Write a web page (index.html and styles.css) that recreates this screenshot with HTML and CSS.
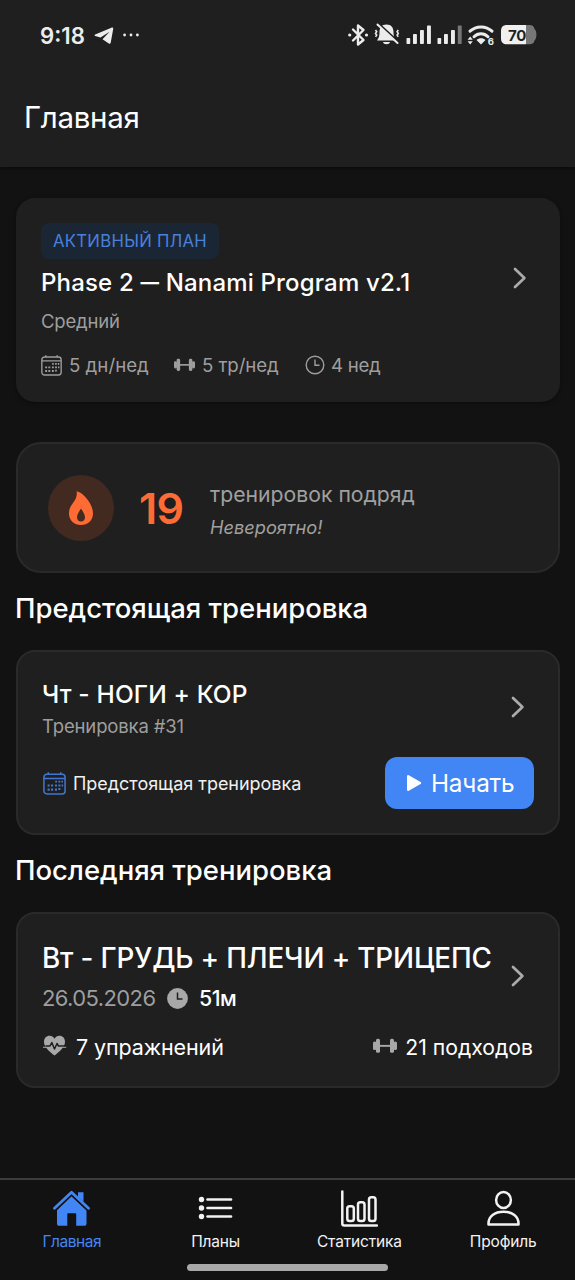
FILE: index.html
```html
<!DOCTYPE html>
<html lang="ru">
<head>
<meta charset="utf-8">
<title>Главная</title>
<link rel="stylesheet" href="styles.css">
</head>
<body>
<svg class="defs" width="0" height="0" aria-hidden="true">
  <symbol id="calendar" viewBox="0 0 20 20">
    <g fill="none" stroke="currentColor" stroke-width="1.300"><rect x=".8" y="1.900" width="18.400" height="17.200" rx="2.600"/><path d="M.8 5.600h18.400M4.600.2v2M15.400.2v2"/></g>
    <path fill="currentColor" d="M10.600 7.600h1.600v1.600h-1.600zM13.400 7.600H15v1.600h-1.600zM16 7.600h1.400v1.600H16zM4 10.900h1.800v1.800H4zM7 10.900h1.800v1.800H7zM10.400 10.900H12.200v1.800h-1.800zM13.400 10.900H15.200v1.800h-1.800zM16.200 10.900h1.300v1.800h-1.300zM4 14.400h1.800v1.800H4zM7 14.400h1.800v1.800H7zM10.400 14.400h1.800v1.800h-1.800zM13.400 14h1.700v1.700h-1.700z"/>
  </symbol>
  <symbol id="dumbbell" viewBox="0 0 24 16">
    <g fill="currentColor"><rect x="0" y="3.600" width="3.400" height="8.400" rx="1.600"/><rect x="3" y=".8" width="4" height="14" rx="1.600"/><rect x="6" y="6.900" width="12" height="1.900"/><rect x="17" y=".8" width="4" height="14" rx="1.600"/><rect x="20.600" y="3.600" width="3.400" height="8.400" rx="1.600"/></g>
  </symbol>
  <symbol id="chevron" viewBox="0 0 14 22">
    <path d="M2 2l9.400 9L2 20" fill="none" stroke="currentColor" stroke-width="2.700" stroke-linecap="round" stroke-linejoin="round"/>
  </symbol>
</svg>

<header class="top">
  <div class="status">
    <span class="time">9:18</span>
    <svg class="plane" width="20" height="18" viewBox="0 0 20 18"><path fill="#ececec" d="M1.200 7.400L17.400.8c1.200-.5 2 .1 1.800 1.300l-2.500 13.700c-.2 1.100-1.100 1.300-1.900.7L8.500 12.300l7-7.600-9 5.800-5.300-1.600c-.8-.3-.8-1.200 0-1.500z"/></svg>
    <svg class="dots" width="16" height="4" viewBox="0 0 16 4"><g fill="#ececec"><circle cx="1.600" cy="2" r="1.400"/><circle cx="8" cy="2" r="1.400"/><circle cx="14.400" cy="2" r="1.400"/></g></svg>
    <svg class="signals" width="190" height="26" viewBox="348 22 190 26">
      <path d="M353 29.500l10.500 10.500-5.500 4.500v-19l5.500 4.500L353 40.500" fill="none" stroke="#ececec" stroke-width="2.400" stroke-linejoin="round" stroke-linecap="round"/>
      <g fill="#ececec"><circle cx="349.700" cy="35" r="1.600"/><circle cx="366.500" cy="35" r="1.600"/>
      <path d="M386.500 24.500c5 0 7 3.500 7 7.500 0 4 .5 5.500 2.500 8.500h-19c2-3 2.500-4.500 2.500-8.500 0-4 2-7.500 7-7.500zM383 42h7c-.5 3-6.500 3-7 0z"/></g>
      <path d="M379.500 24.500l19.500 18" stroke="#1f1f1f" stroke-width="2.200"/>
      <path d="M377.500 24.500l20 18.500" stroke="#ececec" stroke-width="2" stroke-linecap="round"/>
      <path d="M375.500 30l1.200 1.700-1.200 1.700 1.200 1.700-1.200 1.700M398.300 30l-1.200 1.700 1.200 1.700-1.200 1.700 1.200 1.700" fill="none" stroke="#ececec" stroke-width="1.600"/>
      <g fill="#ececec"><rect x="406.500" y="38" width="3.700" height="6" rx=".8"/><rect x="413" y="34" width="3.900" height="10" rx=".8"/><rect x="420" y="30" width="3.900" height="14" rx=".8"/><rect x="427" y="25.500" width="3.900" height="18.500" rx=".8"/>
      <rect x="437.500" y="38" width="3.700" height="6" rx=".8"/><rect x="444" y="34" width="3.900" height="10" rx=".8"/><rect x="451" y="30" width="3.900" height="14" rx=".8"/></g>
      <rect x="457.800" y="25.500" width="3.900" height="18.500" rx=".8" fill="#777"/>
      <g fill="none" stroke="#ececec" stroke-width="3" stroke-linecap="round"><path d="M470 31.200c6-5.700 16-5.700 22 0M474 36.700c4-4 10-4 14 0"/></g>
      <path fill="#ececec" d="M476.500 40c2.500-2.500 6.500-2.500 9 0l-4.500 4.500zM470.200 36.500l2.600 3.300h-5.200zM470.200 44.500l2.600-3.300h-5.200z"/>
      <text x="487.800" y="44.800" class="wifi-gen">6</text>
      <path fill="#777" d="M526 25h3.500c3 0 4.500 1.500 5 4 2.600 2 2.600 9.500 0 11.500-.5 2.500-2 3.800-5 3.800H526z"/>
      <path fill="#f0f0f0" d="M507 25h19v19.300h-19c-4 0-6-2-6-6v-7.300c0-4 2-6 6-6z"/>
      <text x="508" y="40.700" class="level">70</text>
    </svg>
  </div>
  <h1 class="title">Главная</h1>
</header>

<main class="content">
  <section class="card plan">
    <div class="card-head">
      <div class="grow">
        <span class="badge">АКТИВНЫЙ ПЛАН</span>
        <h2 class="plan-name">Phase 2 <span class="dash">—</span> Nanami Program v2.1</h2>
        <p class="level-name">Средний</p>
      </div>
      <svg class="chevron plan-chevron"><use href="#chevron"/></svg>
    </div>
    <div class="meta">
      <svg class="meta-cal"><use href="#calendar"/></svg><span class="m1">5 дн/нед</span>
      <svg class="meta-bell"><use href="#dumbbell"/></svg><span class="m2">5 тр/нед</span>
      <svg class="meta-clock" viewBox="0 0 20 20"><g fill="none" stroke="currentColor" stroke-width="1.400"><circle cx="10" cy="10" r="8.800"/><path d="M10 4.500V10.300h4.500"/></g></svg><span class="m3">4 нед</span>
    </div>
  </section>

  <section class="card outlined streak">
    <div class="flame"><svg width="24" height="34" viewBox="0 0 24 34"><path fill="#ff6b35" fill-rule="evenodd" d="M7.600.3C14 1.500 24 12.500 24 22.500 24 29.500 18.500 34 12 34S0 29.500 0 22.500c0-5 2-8 5-12C7.200 7.500 8.300 4 7.600.3zM12 17.500c-1.500 2.800-4 5.500-4 8.700 0 2.700 1.700 4.300 4 4.300s4-1.600 4-4.300c0-3.200-2.500-5.900-4-8.700z"/></svg></div>
    <span class="count">19</span>
    <div class="streak-text"><p class="streak-label">тренировок подряд</p><p class="streak-note">Невероятно!</p></div>
  </section>

  <h2 class="section">Предстоящая тренировка</h2>
  <section class="card outlined next">
    <div class="card-head">
      <div class="grow"><h3 class="next-name">Чт - НОГИ + КОР</h3><p class="next-no">Тренировка #31</p></div>
      <svg class="chevron next-chevron"><use href="#chevron"/></svg>
    </div>
    <div class="next-row">
      <svg class="next-cal"><use href="#calendar"/></svg><span class="next-status">Предстоящая тренировка</span>
      <button class="start"><svg width="16" height="18" viewBox="0 0 16 18"><path d="M2.200 2.200v13.600L14 9z" fill="#fff" stroke="#fff" stroke-width="2.400" stroke-linejoin="round"/></svg><span>Начать</span></button>
    </div>
  </section>

  <h2 class="section">Последняя тренировка</h2>
  <section class="card outlined last">
    <div class="card-head">
      <div class="grow">
        <h3 class="last-name">Вт - ГРУДЬ + ПЛЕЧИ + ТРИЦЕПС</h3>
        <div class="last-info"><span class="date">26.05.2026</span>
          <svg class="last-clock" width="21" height="21" viewBox="0 0 21 21"><circle cx="10.500" cy="10.500" r="10.400" fill="#a8a8a8"/><path d="M10.500 4.500v6.500h5" fill="none" stroke="#1f1f1f" stroke-width="1.500"/></svg>
          <span class="duration">51м</span></div>
      </div>
      <svg class="chevron last-chevron"><use href="#chevron"/></svg>
    </div>
    <div class="totals">
      <svg class="heart" width="24" height="21" viewBox="0 0 24 21"><path fill="#a8a8a8" d="M11.500 20.500C6 16.500 1 12 1 6.800 1 3 3.500.8 6.500.8c2.200 0 4 1.200 5 3 1-1.800 2.800-3 5-3 3 0 5.500 2.200 5.500 6 0 5.200-5 9.700-10.500 13.700z"/><path d="M2.500 11H7l1.800-3.500 2.700 6.500 2.500-5.500 1.500 2.500H23" fill="none" stroke="#1f1f1f" stroke-width="1.500" stroke-linejoin="round"/><path d="M19.500 12.300h3.700M0 12.300h3" stroke="#a8a8a8" stroke-width="1"/></svg>
      <span class="exercises">7 упражнений</span>
      <svg class="sets-bell"><use href="#dumbbell"/></svg><span class="sets">21 подходов</span>
    </div>
  </section>
</main>

<nav class="tabs">
  <div class="tab-row">
    <a class="tab active"><svg width="37" height="37" viewBox="0 0 37 37"><path fill="currentColor" d="M18.500 6L33.500 20v13.500c0 1.500-.8 2.300-2.300 2.300h-8V24.500c0-.8-.4-1.200-1.200-1.200h-6.500c-.8 0-1.200.4-1.200 1.200v11.300h-8c-1.500 0-2.300-.8-2.300-2.300V20z"/><path d="M1.500 18.800L18.500 3l17 15.800" fill="none" stroke="#121212" stroke-width="5"/><path fill="currentColor" d="M25 2.300h5.500v9.500L25 7z"/><path d="M1.500 18.300L18.500 2.300l17 16" fill="none" stroke="currentColor" stroke-width="2.800" stroke-linecap="round" stroke-linejoin="round"/></svg><span>Главная</span></a>
    <a class="tab"><svg width="37" height="37" viewBox="0 0 37 37"><g fill="currentColor"><circle cx="4.500" cy="9.500" r="2.700"/><circle cx="4.500" cy="18" r="2.700"/><circle cx="4.500" cy="26.500" r="2.700"/></g><path d="M10.500 9.500h23.500M10.500 18h23.500M10.500 26.500h23.500" stroke="currentColor" stroke-width="2.700" stroke-linecap="round"/></svg><span>Планы</span></a>
    <a class="tab"><svg width="37" height="37" viewBox="0 0 37 37"><g fill="none" stroke="currentColor" stroke-width="2.500" stroke-linecap="round"><path d="M1.300 1.500v32c0 1.500.5 2 2 2H36"/><rect x="6.300" y="16.300" width="6.500" height="14.700" rx="2.300"/><rect x="17" y="12.300" width="6.500" height="18.700" rx="2.300"/><rect x="28" y="7.300" width="6.500" height="23.700" rx="2.300"/></g></svg><span>Статистика</span></a>
    <a class="tab"><svg width="37" height="37" viewBox="0 0 37 37"><g fill="none" stroke="currentColor" stroke-width="2.500" stroke-linejoin="round"><ellipse cx="18.500" cy="10" rx="7.400" ry="8"/><path d="M3.500 34.500C3 26 10 21.700 18.500 21.700S34 26 33.500 34.500z"/></g></svg><span>Профиль</span></a>
  </div>
  <div class="home-indicator"></div>
</nav>
</body>
</html>
```
FILE: styles.css
```css
* { box-sizing: border-box; }
body {
  margin: 0;
  width: 575px;
  height: 1280px;
  display: flex;
  flex-direction: column;
  overflow: hidden;
  background: #121212;
  color: #fff;
  font-family: Inter, "Noto Sans", sans-serif;
}
h1, h2, h3, p { margin: 0; white-space: nowrap; }
span { white-space: nowrap; }
svg { display: block; flex: none; }
.defs { position: absolute; }

/* Status bar and title */
.top { height: 167px; background: #1f1f1f; box-shadow: 0 1px 4px rgba(0, 0, 0, .5); }
.status { height: 70px; padding: 0 37px 0 40px; display: flex; align-items: center; }
.time { width: 54px; font-size: 22.200px; font-weight: 600; color: #ececec; }
.plane { margin-top: 2px; }
.dots { margin-left: 9px; }
.signals { margin-left: auto; }
.wifi-gen { font-size: 9.500px; font-weight: 700; fill: #ececec; }
.level { font-size: 15px; font-weight: 700; fill: #1f1f1f; letter-spacing: -.3px; }
.title { padding-left: 24px; line-height: 95px; font-size: 29.500px; font-weight: 400; letter-spacing: -.3px; }

/* Cards */
.content { flex: 1; padding: 31px 15px 0 16px; }
.card { background: #1f1f1f; border-radius: 19px; padding: 25px; }
.outlined { border: 2px solid #2a2a2a; padding: 24px; }
.card-head { display: flex; align-items: center; }
.grow { flex: 1; }
.chevron { width: 14px; height: 22px; color: #ababab; }

.plan { height: 204px; margin-bottom: 40px; box-shadow: 0 1px 4px rgba(0, 0, 0, .4); }
.badge {
  display: block;
  width: 178px;
  height: 36px;
  border-radius: 8px;
  background: #1b2635;
  color: #4a80da;
  text-align: center;
  line-height: 37px;
  font-size: 16.700px;
  letter-spacing: .3px;
}
.plan-name { margin-top: 8px; height: 32px; line-height: 32px; font-size: 24px; font-weight: 500; letter-spacing: .17px; }
.dash { font-size: 18.500px; line-height: 1; font-weight: 700; position: relative; top: -2px; }
.level-name { margin-top: 10px; line-height: 24px; font-size: 18.500px; letter-spacing: -.2px; color: #9e9e9e; }
.plan-chevron { margin-right: 8px; }
.meta { margin-top: 20px; height: 24px; display: flex; align-items: center; color: #9e9e9e; font-size: 18.700px; }
.meta-cal { width: 21px; height: 21px; margin-right: 7px; }
.m1 { width: 105px; }
.meta-bell { width: 21px; height: 14px; margin-right: 7px; }
.m2 { width: 103px; letter-spacing: -.1px; }
.m3 { letter-spacing: -.3px; }
.meta-clock { width: 20px; height: 20px; margin-right: 6px; }

.streak { height: 131px; border-radius: 25px; padding: 30px; display: flex; align-items: center; }
.flame { width: 66px; height: 66px; border-radius: 50%; background: #432a21; display: flex; align-items: center; justify-content: center; }
.count { width: 71px; margin-left: 25px; font-size: 43px; font-weight: 600; letter-spacing: -.8px; color: #ff6b35; }
.streak-text { padding-top: 7px; color: #a0a0a0; }
.streak-text p { line-height: 33px; }
.streak-label { font-size: 21.200px; }
.streak-note { font-size: 18.200px; font-style: italic; }

.section { height: 77px; line-height: 70px; font-size: 27.500px; font-weight: 500; letter-spacing: -.03px; margin-left: -1px; }

.next { height: 185px; }
.next-name { line-height: 36px; font-size: 24.500px; font-weight: 500; letter-spacing: .15px; }
.next-no { line-height: 28px; font-size: 18.500px; letter-spacing: -.15px; color: #9e9e9e; }
.next-chevron, .last-chevron { margin-right: 9px; }
.next-chevron { margin-bottom: 2px; }
.next-row { margin-top: 17px; display: flex; align-items: center; }
.next-cal { width: 23px; height: 23px; margin: 0 7px 0 1px; color: #4377cf; }
.next-status { font-size: 18px; letter-spacing: -.03px; color: #f0f0f0; }
.start {
  margin-left: auto;
  width: 149px;
  height: 52px;
  border: 0;
  border-radius: 12px;
  padding: 0 0 0 21px;
  display: flex;
  align-items: center;
  gap: 9px;
  background: #4285f4;
  color: #fff;
  font: 400 24.300px Inter, sans-serif;
  letter-spacing: -.2px;
}

.last { height: 176px; }
.last-name { line-height: 40px; font-size: 27.800px; font-weight: 500; letter-spacing: -.14px; margin-right: -10px; }
.last-info { height: 40px; display: flex; align-items: center; }
.date { width: 125px; font-size: 22px; letter-spacing: -.6px; color: #9e9e9e; }
.duration { margin-left: 11px; font-size: 21.300px; font-weight: 500; letter-spacing: -.5px; }
.last-chevron { margin-bottom: 5px; }
.totals { margin-top: 14px; height: 30px; display: flex; align-items: center; }
.heart { margin: 0 9px 3px 1px; }
.exercises { font-size: 21.500px; letter-spacing: -.12px; }
.sets-bell { width: 24px; height: 16px; margin: 0 8px 2px auto; color: #a8a8a8; }
.sets { font-size: 21.200px; margin-right: 1px; }

/* Bottom navigation */
.tabs { height: 102px; border-top: 2px solid #3d3d3d; }
.tab-row { height: 84px; display: grid; grid-template-columns: repeat(4, 1fr); padding-top: 10px; }
.tab { display: flex; flex-direction: column; align-items: center; font-size: 15.500px; line-height: 30px; color: #f2f2f2; letter-spacing: -.15px; }
.active { color: #4285f4; letter-spacing: -.45px; }
.home-indicator { width: 201px; height: 7px; margin: 0 auto; border-radius: 4px; background: #a8a8a8; }
```
